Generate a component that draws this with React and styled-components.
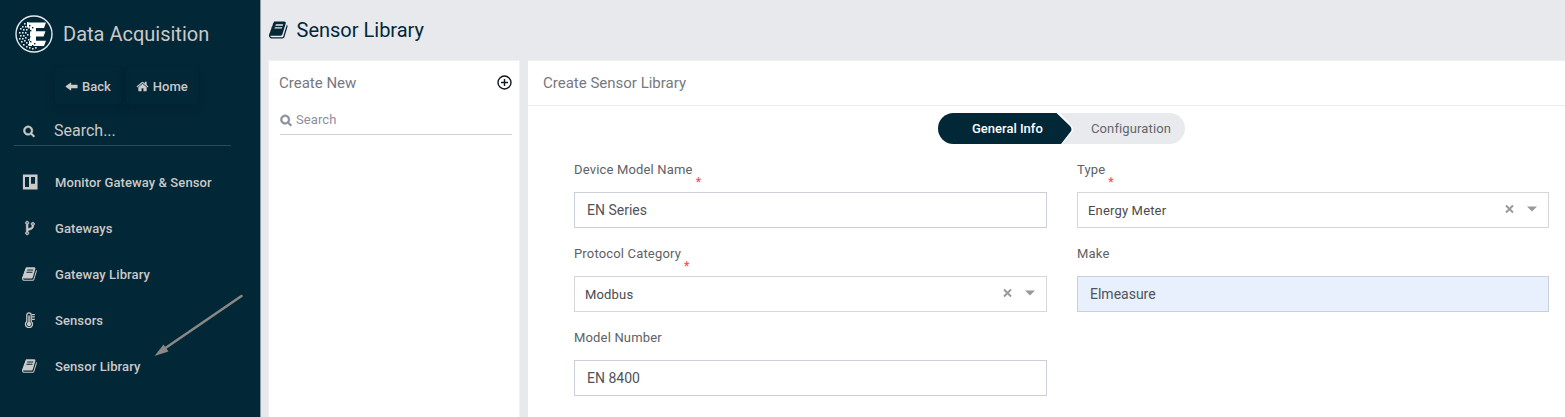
import React from 'react';
import styled, { createGlobalStyle } from 'styled-components';

const GlobalStyle = createGlobalStyle`
  * { box-sizing: border-box; }
  body { margin: 0; font-family: Roboto, "Liberation Sans", sans-serif; background: #e8e9ed; overflow: hidden; }
`;

const ICONS = {
  book: 'M1639 478q40 57 18 129l-275 906q-19 64-76.5 107.5t-122.5 43.5h-923q-77 0-148.5-53.5t-99.5-131.5q-24-67-2-127 0-4 3-27t4-37q1-8-3-21.5t-3-19.5q2-11 8-21t16.5-23.5 16.5-23.5q23-38 45-91.5t30-91.5q3-10 .5-30t-.5-28q3-11 17-28t17-23q21-36 42-92t25-90q1-9-2.5-32t.5-28q4-13 22-30.5t22-22.5q19-26 42.5-84.5t27.5-96.5q1-8-3-25.5t-2-26.5q2-8 9-18t18-23 17-21q8-12 16.5-30.5t15-35 16-36 19.5-32 26.5-23.5 36-11.5 47.5 5.5l-1 3q38-9 51-9h761q74 0 114 56t18 130l-274 906q-36 119-71.5 153.5t-128.5 34.5h-869q-27 0-38 15-11 16-1 43 24 70 144 70h923q29 0 56-15.5t35-41.5l300-987q7-22 5-57 38 15 59 43zm-1064 2q-4 13 2 22.5t20 9.5h608q13 0 25.5-9.5t16.5-22.5l21-64q4-13-2-22.5t-20-9.5h-608q-13 0-25.5 9.5t-16.5 22.5zm-83 256q-4 13 2 22.5t20 9.5h608q13 0 25.5-9.5t16.5-22.5l21-64q4-13-2-22.5t-20-9.5h-608q-13 0-25.5 9.5t-16.5 22.5z',
  fork: 'M672 1472q0-40-28-68t-68-28-68 28-28 68 28 68 68 28 68-28 28-68zm0-1152q0-40-28-68t-68-28-68 28-28 68 28 68 68 28 68-28 28-68zm640 128q0-40-28-68t-68-28-68 28-28 68 28 68 68 28 68-28 28-68zm96 0q0 52-26 96.5t-70 69.5q-2 287-226 414-67 38-203 81-128 40-169.5 71t-41.5 100v26q44 25 70 69.5t26 96.5q0 80-56 136t-136 56-136-56-56-136q0-52 26-96.5t70-69.5v-820q-44-25-70-69.5t-26-96.5q0-80 56-136t136-56 136 56 56 136q0 52-26 96.5t-70 69.5v497q54-26 154-57 55-17 87.5-29.5t70.5-31 59-39.5 40.5-51 28-69.5 8.5-91.5q-44-25-70-69.5t-26-96.5q0-80 56-136t136-56 136 56 56 136z',
  search: 'M1216 832q0-185-131.5-316.5t-316.5-131.5-316.5 131.5-131.5 316.5 131.5 316.5 316.5 131.5 316.5-131.5 131.5-316.5zm512 832q0 52-38 90t-90 38q-54 0-90-38l-343-342q-179 124-399 124-143 0-273.5-55.5t-225-150-150-225-55.5-273.5 55.5-273.5 150-225 225-150 273.5-55.5 273.5 55.5 225 150 150 225 55.5 273.5q0 220-124 399l343 343q37 37 37 90z',
  home: 'M1472 992v480q0 26-19 45t-45 19h-384v-384h-256v384h-384q-26 0-45-19t-19-45v-480q0-1 .5-3t.5-3l575-474 575 474q1 2 1 6zm223-69l-62 74q-8 9-21 11h-3q-13 0-21-7l-692-577-692 577q-12 8-24 7-13-2-21-11l-62-74q-8-10-7-23.5t11-21.5l719-599q32-26 76-26t76 26l244 204v-195q0-14 9-23t23-9h192q14 0 23 9t9 23v408l219 182q10 8 11 21.5t-7 23.5z',
  back: 'M1728 700v392q0 44-44 44H850v250q0 44-35 58-30 10-60-16L120 948q-52-52 0-104L755 364q30-26 60-16 35 14 35 58v250h834q44 0 44 44z',
  board: 'M100 60h1640v1680h-1640zM336 336v1120h448v-1120zM1010 336v760h448v-760z',
};

const Glyph = styled.svg`
  display: block;
  flex: none;
  width: ${p => p.$size}px;
  height: ${p => p.$size}px;
  fill: currentColor;
`;

const Icon = ({ name, size, weight = 0 }) => (
  <Glyph viewBox="0 0 1792 1792" $size={size} overflow="visible">
    <path fillRule="evenodd" d={ICONS[name]} stroke="currentColor" strokeWidth={weight} />
  </Glyph>
);

const Thermometer = () => (
  <Glyph viewBox="0 0 16 16" $size={16}>
    <path d="M4.8 9.4V3a2.2 2.2 0 0 1 4.4 0v6.4a3.5 3.5 0 1 1-4.4 0Z" fill="none" stroke="currentColor" strokeWidth="1.3" />
    <path d="M6.3 3.5h1.5v6.6a2.1 2.1 0 1 1-1.5 0Z" />
    <path d="M10 1.9h2.8v1.3H10zM10 4.3h2.8v1.3H10zM10 6.7h2.8v1.3H10z" />
  </Glyph>
);

const PIXELS = [
  [9, 8], [12, 7], [14, 9], [7, 11], [10, 11], [13, 12], [5, 13], [8, 14], [11, 14], [4, 17], [7, 17], [10, 17],
  [12, 19], [5, 20], [8, 20], [4, 23], [7, 23], [10, 22], [13, 24], [6, 26], [9, 25], [11, 27], [8, 29], [13, 29],
  [11, 31], [14, 32], [17, 33], [20, 32],
];
const HOLES = [[14, 10], [17, 12], [15, 15], [14, 21], [15, 26], [19, 28], [17, 30]];

const Logo = () => (
  <svg width="38" height="38" viewBox="0 0 38 38">
    <circle cx="19" cy="19" r="18" fill="none" stroke="#e6eaec" strokeWidth="1.4" />
    <path fill="#fff" d="M12 7.5H31L29 13H21v3.3H30.5L28.5 21.5H21v4.3H31L29 31H14V26h1V12.5H12Z" />
    {PIXELS.map(([x, y]) => <rect key={`${x}-${y}`} x={x} y={y} width="1.6" height="1.6" fill="#e0e7ea" />)}
    {HOLES.map(([x, y]) => <rect key={`${x}-${y}`} x={x} y={y} width="1.4" height="1.4" fill="#022736" />)}
  </svg>
);

const Page = styled.div`
  position: relative;
  display: flex;
  height: 417px;
`;
const Sidebar = styled.aside`
  width: 261px;
  flex: none;
  background: #022736;
  border-right: 1px solid #8d9aa5;
  color: #ccc9c9;
`;
const Brand = styled.div`
  display: flex;
  align-items: center;
  gap: 10px;
  height: 68px;
  padding-left: 15px;
  font-size: 20px;
`;
const QuickLinks = styled.nav`
  display: flex;
  gap: 5px;
  height: 36px;
  padding-left: 55px;
`;
const QuickLink = styled.a`
  display: flex;
  align-items: center;
  gap: 4px;
  height: 36px;
  padding: 0 10px;
  border-radius: 3px;
  box-shadow: 0 5px 10px rgba(0, 20, 42, 0.2);
  font-size: 13px;
  font-weight: 500;
`;
const SideSearch = styled.div`
  display: flex;
  align-items: center;
  gap: 19px;
  width: 217px;
  height: 32px;
  margin: 10px 0 0 14px;
  padding: 2px 0 0 9px;
  border-bottom: 1px solid #284a59;
  font-size: 16px;
`;
const Menu = styled.ul`
  margin: 13px 0 0;
  padding: 0;
  list-style: none;
`;
const MenuItem = styled.li`
  display: flex;
  align-items: center;
  height: 46px;
  padding-left: 22px;
  font-size: 13px;
  font-weight: 500;
  letter-spacing: 0.1px;
`;
const MenuIcon = styled.span`
  display: flex;
  justify-content: center;
  width: 16px;
  margin-right: 17px;
`;
const Pointer = styled.svg`
  position: absolute;
  left: 150px;
  top: 290px;
`;
const Content = styled.main`
  flex: 1;
  min-width: 0;
  display: flex;
  flex-direction: column;
`;
const PageTitle = styled.h1`
  display: flex;
  align-items: center;
  gap: 8px;
  height: 60px;
  margin: 0;
  padding-left: 7.5px;
  color: #022736;
  font-size: 20px;
  font-weight: 400;
`;
const Panels = styled.div`
  display: flex;
  flex: 1;
  gap: 8px;
  padding-left: 7px;
`;
const ListPanel = styled.section`
  width: 252px;
  padding: 0 7px 0 11px;
  background: #fff;
  border: 1px solid #f1f1f4;
  border-bottom: 0;
`;
const ListHeader = styled.div`
  display: flex;
  align-items: center;
  justify-content: space-between;
  height: 44px;
  margin-left: -1px;
  color: #76797f;
  font-size: 15px;
`;
const AddIcon = styled.svg`
  display: block;
  margin-bottom: 2px;
`;
const ListSearch = styled.div`
  display: flex;
  align-items: center;
  gap: 4px;
  height: 30px;
  border-bottom: 1px solid #cdced9;
  color: #8d8f9e;
  font-size: 13px;
  letter-spacing: 0.1px;
`;
const FormPanel = styled.section`
  flex: 1;
  background: #fff;
  border-top: 1px solid #f0f0f3;
`;
const FormTitle = styled.h2`
  display: flex;
  align-items: center;
  height: 45px;
  margin: 0;
  padding-left: 15px;
  border-bottom: 1px solid #ebecef;
  color: #76797f;
  font-size: 15px;
  font-weight: 400;
`;
const Steps = styled.div`
  display: flex;
  width: 247px;
  height: 31px;
  margin: 7px 0 0 410px;
  border-radius: 16px;
  background: #e9eaee;
  overflow: hidden;
  font-size: 13px;
`;
const ActiveStep = styled.div`
  position: relative;
  display: flex;
  align-items: center;
  width: 137px;
  padding-left: 34px;
  color: #fff;
  font-weight: 500;
`;
const StepShape = styled.svg`
  position: absolute;
  left: 0;
  top: 0;
`;
const StepText = styled.span`
  position: relative;
`;
const NextStep = styled.div`
  display: flex;
  align-items: center;
  padding-left: 16px;
  color: #63666b;
  letter-spacing: 0.12px;
`;
const Form = styled.form`
  display: grid;
  grid-template-columns: 473px 472px;
  column-gap: 30px;
  row-gap: 18px;
  padding: 18px 0 0 46px;
`;
const Label = styled.label`
  display: flex;
  height: 30px;
  color: #5e6166;
  font-size: 13px;
  line-height: 16px;
  letter-spacing: 0.17px;
`;
const Required = styled.span`
  padding: 12px 0 0 3px;
  color: #ff4b55;
  font-size: 12px;
  font-weight: 500;
`;
const Control = styled.div`
  display: flex;
  align-items: center;
  height: 36px;
  padding: 0 11px 0 ${p => (p.$select ? 10 : 12)}px;
  border: 1px solid ${p => (p.$select ? '#d5d6da' : '#ccced9')};
  background: ${p => (p.$filled ? '#e8f0fe' : '#fff')};
  color: ${p => (p.$select ? '#484b4f' : '#505359')};
  font-size: ${p => (p.$select ? 13 : 14)}px;
  letter-spacing: ${p => (p.$select ? 0.17 : 0)}px;
`;
const Actions = styled.svg`
  margin-left: auto;
  margin-bottom: 3px;
`;

const Field = ({ label, required, value, select, filled }) => (
  <div>
    <Label>{label}{required && <Required>*</Required>}</Label>
    <Control $select={select} $filled={filled}>
      {value}
      {select && (
        <Actions width="32" height="10" viewBox="0 0 32 10">
          <path d="M1 1.5 8 8.5M8 1.5 1 8.5" stroke="#999" strokeWidth="1.9" />
          <path d="M22 2.5h10l-5 5Z" fill="#999" />
        </Actions>
      )}
    </Control>
  </div>
);

const MENU = [
  ['board', 'Monitor Gateway & Sensor'],
  ['fork', 'Gateways'],
  ['book', 'Gateway Library'],
  ['thermometer', 'Sensors'],
  ['book', 'Sensor Library'],
];

export default function App() {
  return (
    <>
      <GlobalStyle />
      <Page>
        <Sidebar>
          <Brand><Logo />Data Acquisition</Brand>
          <QuickLinks>
            <QuickLink><Icon name="back" size={13} />Back</QuickLink>
            <QuickLink><Icon name="home" size={13} />Home</QuickLink>
          </QuickLinks>
          <SideSearch><Icon name="search" size={12} weight={70} />Search...</SideSearch>
          <Menu>
            {MENU.map(([icon, text]) => (
              <MenuItem key={text}>
                <MenuIcon>
                  {icon === 'thermometer' ? <Thermometer /> : <Icon name={icon} size={16} weight={icon === 'fork' ? 70 : 0} />}
                </MenuIcon>
                {text}
              </MenuItem>
            ))}
          </Menu>
        </Sidebar>
        <Content>
          <PageTitle><Icon name="book" size={20} />Sensor Library</PageTitle>
          <Panels>
            <ListPanel>
              <ListHeader>
                Create New
                <AddIcon width="15" height="15" viewBox="0 0 15 15" fill="none" stroke="#111820" strokeWidth="1.4">
                  <circle cx="7.5" cy="7.5" r="6.5" />
                  <path d="M7.5 4v7M4 7.5h7" />
                </AddIcon>
              </ListHeader>
              <ListSearch><Icon name="search" size={12} weight={80} />Search</ListSearch>
            </ListPanel>
            <FormPanel>
              <FormTitle>Create Sensor Library</FormTitle>
              <Steps>
                <ActiveStep>
                  <StepShape width="137" height="31" viewBox="0 0 137 31">
                    <path d="M0 0H122L134 13Q136.5 16.5 134 19L124 31H0Z" fill="#fff" />
                    <path d="M0 0H118.5L132 13Q135 16.5 132 19.5L123 31H0Z" fill="#022736" />
                  </StepShape>
                  <StepText>General Info</StepText>
                </ActiveStep>
                <NextStep>Configuration</NextStep>
              </Steps>
              <Form>
                <Field label="Device Model Name" required value="EN Series" />
                <Field label="Type" required value="Energy Meter" select />
                <Field label="Protocol Category" required value="Modbus" select />
                <Field label="Make" value="Elmeasure" filled />
                <Field label="Model Number" value="EN 8400" />
              </Form>
            </FormPanel>
          </Panels>
        </Content>
        <Pointer width="96" height="70" viewBox="0 0 96 70">
          <path d="M91.5 6 14 59" stroke="#8b8784" strokeWidth="2.6" strokeLinecap="round" />
          <path d="M4.5 66 13.5 54.5 18.5 61.5Z" fill="#8b8784" />
        </Pointer>
      </Page>
    </>
  );
}
